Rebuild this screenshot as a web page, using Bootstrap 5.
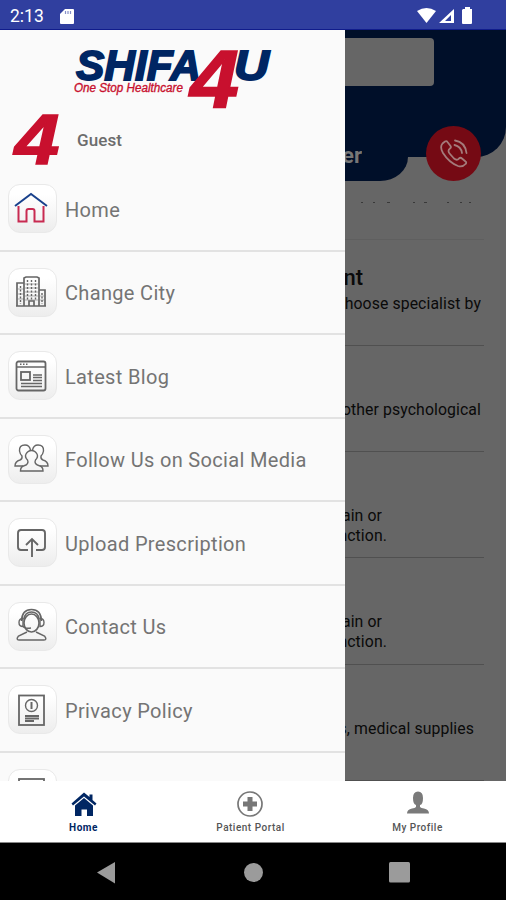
<!DOCTYPE html>
<html lang="en">
<head>
<meta charset="utf-8">
<meta name="viewport" content="width=device-width, initial-scale=1">
<title>Shifa4U</title>
<link href="https://cdn.jsdelivr.net/npm/bootstrap@5.3.0/dist/css/bootstrap.min.css" rel="stylesheet">
<style>
body{font-family:Roboto,sans-serif;width:506px;height:900px;background:#000}
svg{display:block;flex:none}
.statusbar{height:30px;background:#303f9f;border-bottom:1px solid #101c8c;padding:3px 33px 0 10px;font-size:17.5px;letter-spacing:0}
.stage{height:751px}
.drawer{width:345px;background:#fafafa}
.brand{height:84px;padding:15px 0 0 70px}
.guest{flex:none;height:54px;padding-left:12px;gap:15px;font-size:17px;font-weight:500;color:#6c6c6c;letter-spacing:.1px}
.menu-row{flex:none;height:83.5px;padding-left:8px;gap:8px;border-bottom:2px solid #e2e2e2;font-size:20px;letter-spacing:.33px;color:#747474}
.menu-row span:last-child{padding-top:2px}
.tile{width:49px;height:49px;border-radius:12px;border:1.5px solid #e9e9e9;background:linear-gradient(#fff 20%,#ededed);flex:none}
.tile svg{stroke:#666;fill:none;stroke-width:1.4;margin-right:3px}
.behind{background:#666;color:#0a0a0a;flex:1}
.hero{height:127px;background:#000f29;border-bottom-right-radius:30px;padding-top:8px}
.search{width:89px;height:48px;background:#666;border-radius:0 4px 4px 0}
.tab{width:63px;height:24px;background:#000f29;border-radius:0 0 28px 0/0 0 24px 0}
.tab-title{width:17px;font-size:22px;font-weight:700;color:#777;line-height:26px;margin-top:-14px}
.call{width:55px;height:55px;background:#750a14;right:25px;top:96px}
.dots{height:58.5px;padding:20px 0 0 15px;border-bottom:1px solid #5f5f5f;margin-right:22px}
.svc{height:106.3px;margin-right:22px;border-bottom:1.5px solid #505050;padding-top:25px}
.svc:last-child{height:116px}
.svc-name{height:29px;font-size:22px;font-weight:500;line-height:26px}
.svc-text{font-size:15.8px;line-height:19.5px;letter-spacing:.1px}
.clip{display:flex;justify-content:flex-end;overflow:hidden;white-space:nowrap}
.w-a{width:136px}.w-b{width:136px}.w-c{width:37px}.w-d{width:42px}.w-e{width:129px}.w-n{width:18px}
.tabs{height:62px;background:#fff;border-bottom:1px solid #888;color:#555}
.tab-item{width:167px;padding-top:9px;font-size:10px;font-weight:500;letter-spacing:.5px;line-height:12px}
.tab-item svg{height:28px;margin-bottom:4px}
.tab-item.on{color:#002663;font-weight:700}
.sysnav{height:57px}
</style>
<script src="https://cdn.jsdelivr.net/npm/bootstrap@5.3.0/dist/js/bootstrap.bundle.min.js"></script>
</head>
<body class="overflow-hidden">
<header class="statusbar d-flex align-items-center text-white">
  <span>2:13</span>
  <svg class="ms-3" width="14" height="17" viewBox="0 0 14 17"><path d="M5 1h8q1 0 1 1v13q0 1-1 1H1q-1 0-1-1V6z" fill="#fff"/><path d="M5.500 3v3M8 3v3M10.500 3v3" stroke="#8690c8" stroke-width="1.200"/></svg>
  <svg class="ms-auto" width="56" height="18" viewBox="0 0 56 18" fill="#fff"><path d="M0 4Q9.500-2 19 4L9.500 16z"/><path d="M37 2v14H22zM34 8l-6 6h6z" fill-rule="evenodd"/><path d="M46 2h2V0h5v2h2v14q0 1-1 1h-8q-1 0-1-1V3z"/></svg>
</header>

<main class="stage d-flex overflow-hidden">
  <aside class="drawer d-flex flex-column overflow-hidden">
    <div class="brand flex-shrink-0">
      <svg width="206" height="66" viewBox="70 45 206 66" font-family="Liberation Sans,sans-serif" font-style="italic">
        <g fill="#002663" stroke="#002663" stroke-width="1.800" font-weight="700" font-size="42"><text x="76" y="80" textLength="125" lengthAdjust="spacingAndGlyphs">SHIFA</text><text x="234" y="80" textLength="35" lengthAdjust="spacingAndGlyphs">U</text></g>
        <text x="190" y="107" font-size="81" font-weight="700" fill="#c8102e" stroke="#c8102e" stroke-width="1.500" textLength="49" lengthAdjust="spacingAndGlyphs">4</text>
        <text x="74" y="92" font-size="12" fill="#c8102e" stroke="#c8102e" stroke-width=".35" textLength="109" lengthAdjust="spacingAndGlyphs">One Stop Healthcare</text>
      </svg>
    </div>
    <div class="guest d-flex align-items-center">
      <svg width="50" height="54" viewBox="12 114 50 54"><text x="14.500" y="163.500" font-family="Liberation Sans,sans-serif" font-style="italic" font-size="70" font-weight="700" fill="#c8102e" stroke="#c8102e" stroke-width="1.500" textLength="45" lengthAdjust="spacingAndGlyphs">4</text></svg>
      <span>Guest</span>
    </div>
    <div class="menu-row d-flex align-items-center"><span class="tile d-flex align-items-center justify-content-center"><svg width="38" height="38" viewBox="0 0 38 38"><path d="M3 16 19 4l16 12" stroke="#19418c" stroke-width="2"/><path d="M6.500 16v15.500h8V21q0-2 2-2h4q2 0 2 2v10.500h9V16" stroke="#c82a51" stroke-width="2"/></svg></span><span>Home</span></div>
    <div class="menu-row d-flex align-items-center"><span class="tile d-flex align-items-center justify-content-center"><svg width="38" height="38" viewBox="0 0 38 38"><path d="M12 33V5l2-1h11l2 1v28M12 10H5v23h28V17h-6M4 33h30M17 33v-5h5v5" stroke-width="1.700"/><path d="M15.500 7v20M19.500 7v20M23.500 7v20M8.500 13v18M30 20v11" stroke-dasharray="2 1.500"/><path d="M13 11h13M13 15h13M13 19h13M13 23h13M13 27h13M6 16h6M6 21h6M6 26h6M28 23h4M28 27h4" stroke-width=".5"/></svg></span><span>Change City</span></div>
    <div class="menu-row d-flex align-items-center"><span class="tile d-flex align-items-center justify-content-center"><svg width="38" height="38" viewBox="0 0 38 38"><rect x="4.500" y="4.500" width="29" height="29" rx="2" stroke-width="1.800"/><path d="M5 10h28M8 7.300h1.500M11 7.300h1.500M14 7.300h1.500"/><rect x="9" y="15" width="9" height="8" stroke-width="1.800"/><path d="M21 18h9M21 20.500h9M21 23.500h9M9 26.500h21M9 29.500h21"/></svg></span><span>Latest Blog</span></div>
    <div class="menu-row d-flex align-items-center"><span class="tile d-flex align-items-center justify-content-center"><svg width="38" height="38" viewBox="0 0 38 38"><path d="M15.500 20q-3-3-1.500-6 2-3.500 5.500-3.500T25 14q1.500 3-1.500 6-1 2 0 3.500 1 1.500 4.500 2.500 3 1 3 5H8.500q0-4 3-5 3.500-1 4-2.500 1-1.500 0-3.500z"/><path d="M18.500 10q-1-5-5.500-5-6 0-5.500 6 .5 3 2.500 5 .5 3-2 4-5 1.500-5 6h8M20.500 10q1-5 5.500-5 6 0 5.500 6-.5 3-2.500 5-.5 3 2 4 5 1.500 5 6h-8"/></svg></span><span>Follow Us on Social Media</span></div>
    <div class="menu-row d-flex align-items-center"><span class="tile d-flex align-items-center justify-content-center"><svg width="38" height="38" viewBox="0 0 38 38"><path d="M16 26H9q-3 0-3-3V9q0-3 3-3h21q3 0 3 3v14q0 3-3 3h-6M20 33V16M14 21l6-6 6 6" stroke-width="1.900"/></svg></span><span>Upload Prescription</span></div>
    <div class="menu-row d-flex align-items-center"><span class="tile d-flex align-items-center justify-content-center"><svg width="38" height="38" viewBox="0 0 38 38"><ellipse cx="19.500" cy="16" rx="7.500" ry="9" stroke-width="1.600"/><path d="M9.500 14Q10 2.500 19.500 2.500T29.500 14M12 12Q13 5 19.500 5T27 12" stroke-width="1.600"/><path d="M11 11.500q-4 0-4 4t4 4zM28 11.500q4 0 4 4t-4 4zM11 19q1 3 8 2M15 25l-8.500 4q-3 4 .5 4h25q3.500 0 .5-4L24 25"/></svg></span><span>Contact Us</span></div>
    <div class="menu-row d-flex align-items-center"><span class="tile d-flex align-items-center justify-content-center"><svg width="38" height="38" viewBox="0 0 38 38"><rect x="7" y="4.500" width="25" height="29.500" stroke-width="1.800"/><circle cx="19.500" cy="14.500" r="6"/><path d="M19.500 11v7" stroke-width="2"/><path d="M13 25h14M13 27.500h14M13 30h9" stroke-width="2"/></svg></span><span>Privacy Policy</span></div>
    <div class="menu-row d-flex align-items-center"><div class="tile d-flex align-items-center justify-content-center"><svg width="38" height="38" viewBox="0 0 38 38"><rect x="7" y="5" width="25" height="29" stroke-width="1.800"/></svg></div></div>
  </aside>

  <section class="behind position-relative overflow-hidden">
    <div class="hero"><div class="search"></div></div>
    <div class="tab d-flex align-items-start"><div class="tab-title clip">er</div></div>
    <div class="call rounded-circle position-absolute d-flex align-items-center justify-content-center">
      <svg width="30" height="30" viewBox="0 0 30 30" fill="none" stroke="#a47b7b" stroke-width="1.800" stroke-linecap="round" stroke-linejoin="round"><path d="M3.500 4.500 6 2.500q1.500-1 2.500.5l3 4q1 1.500-.5 2.500-3 2 0 5.500l4 4.500q3 2.500 5 0 1.500-1.500 3 0l3.500 3q1.500 1 0 2.500-3 3.500-7.500 2Q10 23.500 4 14 .5 8 3.500 4.500z"/><path d="M16 1.500Q26 3 27.500 14M15.500 6Q22 7.500 23 14"/></svg>
    </div>
    <div class="dots"><svg width="115" height="3" viewBox="0 0 115 3"><path d="M1 1.500h2M13 1.500h2M27 1.500h3M53 1.500h2M64 1.500h3M87 1.500h2M100 1.500h2M109 1.500h2" stroke="#393939"/></svg></div>
    <div class="svc"><div class="svc-name clip w-n">nt</div><div class="svc-text clip w-a">hoose specialist by</div></div>
    <div class="svc"><div class="svc-name"></div><div class="svc-text clip w-b">other psychological</div></div>
    <div class="svc"><div class="svc-name"></div><div class="svc-text clip w-c">ain or</div><div class="svc-text clip w-d">nction.</div></div>
    <div class="svc"><div class="svc-name"></div><div class="svc-text clip w-c">ain or</div><div class="svc-text clip w-d">nction.</div></div>
    <div class="svc"><div class="svc-name"></div><div class="svc-text clip w-e">s, medical supplies</div></div>
  </section>
</main>

<nav class="tabs d-flex">
  <div class="tab-item on d-flex flex-column align-items-center"><svg width="26" viewBox="0 0 26 28" fill="#002663"><path d="M13 2.500 18.500 7V4.500h3V10l4 3.500-1.500 2L13 6.500 2 15.500.5 13.500z"/><path d="M4 15.500 13 8l9 7.500V26h-6v-6.500h-5.500V26H4z"/></svg><span>Home</span></div>
  <div class="tab-item d-flex flex-column align-items-center"><svg width="28" viewBox="0 0 28 28"><circle cx="13" cy="14" r="12" fill="none" stroke="#777" stroke-width="1.700"/><path d="M10.500 7h5v4.500H20v5h-4.500V21h-5v-4.500H6v-5h4.500z" fill="#777"/></svg><span>Patient Portal</span></div>
  <div class="tab-item d-flex flex-column align-items-center"><svg width="24" viewBox="0 0 24 28"><path d="M7 8q0-6.500 5-6.500T17 8t-3 7v2q1 1 4 1.500 5 1 5 5H1q0-4 5-5 3-.5 4-1.500v-2Q7 14 7 8z" fill="#7a7a7a"/></svg><span>My Profile</span></div>
</nav>
<footer class="sysnav bg-black">
  <svg width="506" height="57" viewBox="0 0 506 57" fill="#9b9b9b"><path d="M97 29.500 115 19v21.500z"/><circle cx="253.500" cy="29.500" r="9.500"/><rect x="389" y="19" width="21" height="20.500" rx="1.500"/></svg>
</footer>
</body>
</html>
